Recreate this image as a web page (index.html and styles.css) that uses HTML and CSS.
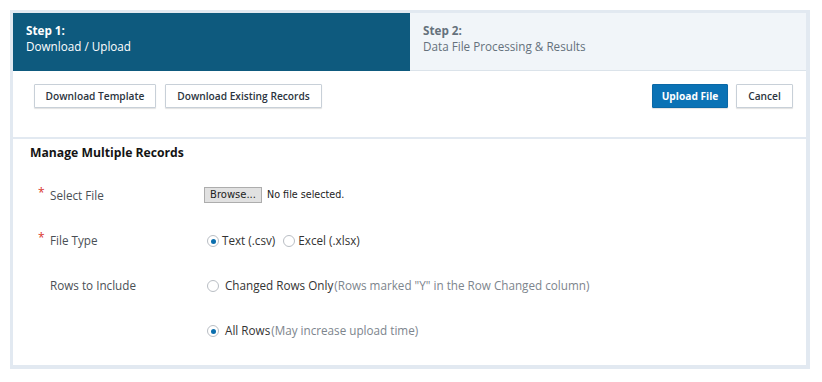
FILE: index.html
```html
<!DOCTYPE html>
<html>
<head>
<meta charset="utf-8">
<link rel="stylesheet" href="styles.css">
</head>
<body>
<div class="frame">
  <div class="steps">
    <div class="step active">
      <div class="step-num">Step 1:</div>
      <div class="step-name">Download / Upload</div>
    </div>
    <div class="step">
      <div class="step-num">Step 2:</div>
      <div class="step-name">Data File Processing &amp; Results</div>
    </div>
  </div>
  <div class="toolbar">
    <div class="group">
      <button class="btn w-tpl">Download Template</button>
      <button class="btn w-exist">Download Existing Records</button>
    </div>
    <div class="group">
      <button class="btn primary w-up">Upload File</button>
      <button class="btn w-cancel">Cancel</button>
    </div>
  </div>
  <div class="section">
    <h2 class="title">Manage Multiple Records</h2>
    <div class="form">
      <div class="label"><span class="req">*</span>Select File</div>
      <div class="field">
        <span class="browse">Browse...</span><span class="nofile">No file selected.</span>
      </div>

      <div class="label"><span class="req">*</span>File Type</div>
      <div class="field">
        <span class="radio on"></span><span class="opt">Text (.csv)</span>
        <span class="radio gap-l"></span><span class="opt">Excel (.xlsx)</span>
      </div>

      <div class="label"><span class="req"></span>Rows to Include</div>
      <div class="field">
        <span class="radio"></span><span class="opt wide">Changed Rows Only</span><span class="hint">(Rows marked "Y" in the Row Changed column)</span>
      </div>

      <div class="label"></div>
      <div class="field">
        <span class="radio on"></span><span class="opt wide">All Rows</span><span class="hint">(May increase upload time)</span>
      </div>
    </div>
  </div>
</div>
</body>
</html>
```

FILE: styles.css
```css
* { box-sizing: border-box; }
body {
  margin: 0;
  background: #ffffff;
  font-family: "Open Sans", "Noto Sans", sans-serif;
  color: #333;
}
.frame {
  margin: 10px;
  width: 800px;
  height: 359px;
  border: 3px solid #e2e9f1;
  border-right-width: 4px;
  border-bottom-width: 4px;
  background: #fff;
}
.steps {
  display: flex;
  height: 58px;
  background: #f1f5f9;
  border-bottom: 1px solid #dbe3ea;
}
.step {
  flex: 1;
  padding: 9px 13px 0;
  font-size: 11.7px;
  line-height: 16px;
  color: #65717c;
}
.step.active {
  flex: 0 0 397px;
  background: #0e5a7e;
  color: #ffffff;
  margin-bottom: -1px;
}
.step-num { font-weight: 700; }
.toolbar {
  height: 68px;
  display: flex;
  justify-content: space-between;
  align-items: flex-start;
  padding: 13px 13px 0 21px;
  border-bottom: 2px solid #e2e9f1;
}
.group { display: flex; gap: 9px; }
.group + .group { gap: 8px; }
.btn {
  height: 24px;
  padding: 0;
  font-family: "Open Sans", sans-serif;
  font-size: 10.2px;
  font-weight: 600;
  color: #2b3440;
  background: #fff;
  border: 1px solid #c8d0d8;
  border-radius: 1px;
  box-shadow: 0 1px 1px rgba(0,0,0,0.12);
}
.btn.primary {
  background: #0a72b5;
  border-color: #0a68a6;
  color: #fff;
  font-weight: 700;
}
.w-tpl { width: 122px; }
.w-exist { width: 157px; }
.w-up { width: 76px; }
.w-cancel { width: 57px; }
.section { padding: 5px 0 0 17px; }
.title {
  margin: 0;
  font-size: 12.2px;
  line-height: 18px;
  font-weight: 700;
  color: #141414;
}
.form {
  margin-top: 10px;
  display: grid;
  grid-template-columns: 174px 1fr;
  grid-auto-rows: 45px;
}
.label, .field {
  display: flex;
  align-items: center;
  font-size: 11.7px;
}
.label {
  padding-left: 8px;
  color: #4a4f55;
}
.req {
  display: inline-block;
  width: 12px;
  color: #d9342b;
  font-size: 12px;
  position: relative;
  top: -2px;
}
.browse {
  display: inline-block;
  width: 58px;
  height: 16px;
  line-height: 14px;
  text-align: center;
  background: #e1e1e1;
  border: 1px solid #adadad;
  font-family: "DejaVu Sans", sans-serif;
  font-size: 10px;
  color: #222;
}
.nofile {
  margin-left: 5px;
  font-family: "DejaVu Sans", sans-serif;
  font-size: 9.6px;
  color: #222;
}
.radio {
  display: inline-block;
  width: 12px;
  height: 12px;
  border: 1px solid #b9bec4;
  border-radius: 50%;
  margin: 3px 3px 0 3px;
  background: #fff;
  position: relative;
}
.radio.on::after {
  content: "";
  position: absolute;
  left: 2.5px;
  top: 2.5px;
  width: 5px;
  height: 5px;
  border-radius: 50%;
  background: #0b6fae;
}
.radio.gap-l { margin-left: 8px; }
.opt { color: #333; font-size: 11.7px; }
.opt.wide { margin-left: 3px; }
.hint { color: #7d858d; font-size: 11.7px; margin-left: 1px; }
```
